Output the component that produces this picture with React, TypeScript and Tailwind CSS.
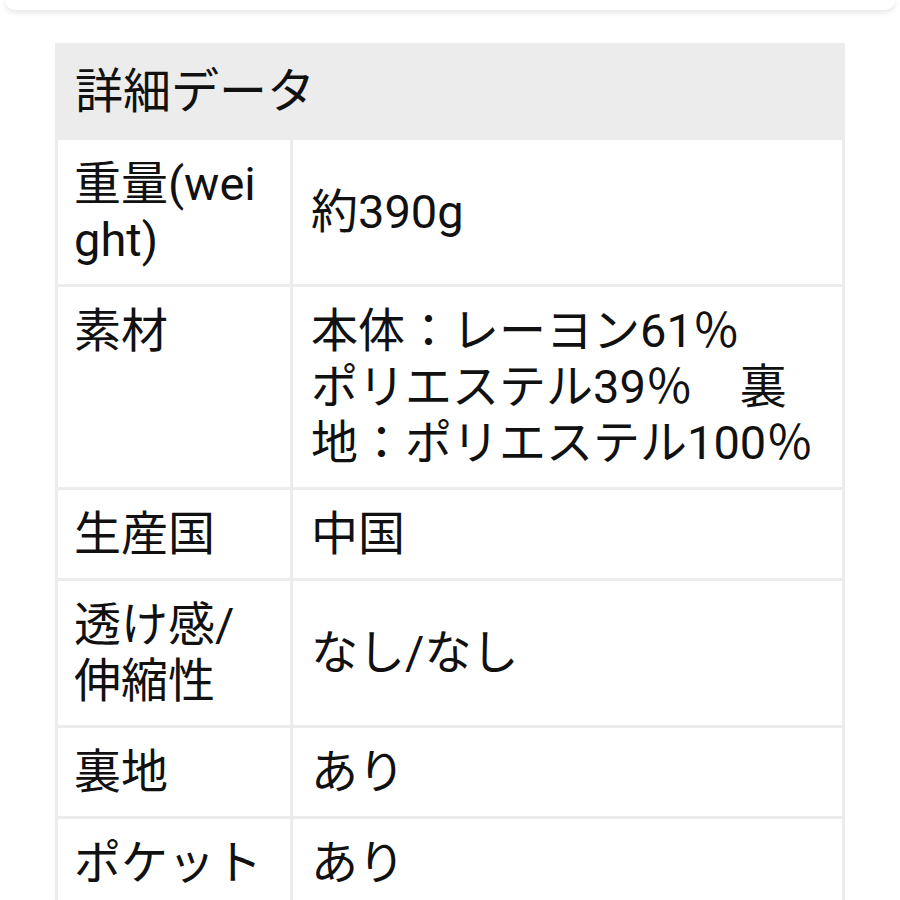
const rows: { label: string; value: React.ReactNode }[] = [
  { label: "重量(weight)", value: "約390g" },
  {
    label: "素材",
    value: (
      <>
        本体：レーヨン61％
        <br />
        ポリエステル39％　裏
        <br />
        地：ポリエステル100％
      </>
    ),
  },
  { label: "生産国", value: "中国" },
  { label: "透け感/伸縮性", value: "なし/なし" },
  { label: "裏地", value: "あり" },
  { label: "ポケット", value: "あり" },
]

export default function App() {
  return (
    <div
      className="relative h-[900px] w-[900px] overflow-hidden bg-white text-[#111]"
      style={{ fontFamily: "Roboto, 'Noto Sans CJK JP', sans-serif" }}
    >
      {/* top card edge */}
      <div className="mx-[5px] h-[10px] rounded-b-[14px] bg-white shadow-[0_2px_6px_rgba(0,0,0,0.12)]" />

      <div className="ml-[55px] mt-[33px] w-[790px] bg-[#ececec] px-[3px] pb-[3px]">
        <div className="flex h-[97px] items-center px-[17px] text-[48px] leading-[56px]">
          詳細データ
        </div>
        <div className="grid grid-cols-[232px_1fr] gap-[3px]">
          {rows.map((r) => (
            <Row key={r.label} label={r.label} value={r.value} />
          ))}
        </div>
      </div>
    </div>
  )
}

function Row({ label, value }: { label: string; value: React.ReactNode }) {
  return (
    <>
      <div className="bg-white px-[16px] py-4 text-[47px] leading-[56px] break-all">
        {label}
      </div>
      <div className="flex items-center bg-white px-[18px] py-4 text-[47px] leading-[56px]">
        <div>{value}</div>
      </div>
    </>
  )
}
